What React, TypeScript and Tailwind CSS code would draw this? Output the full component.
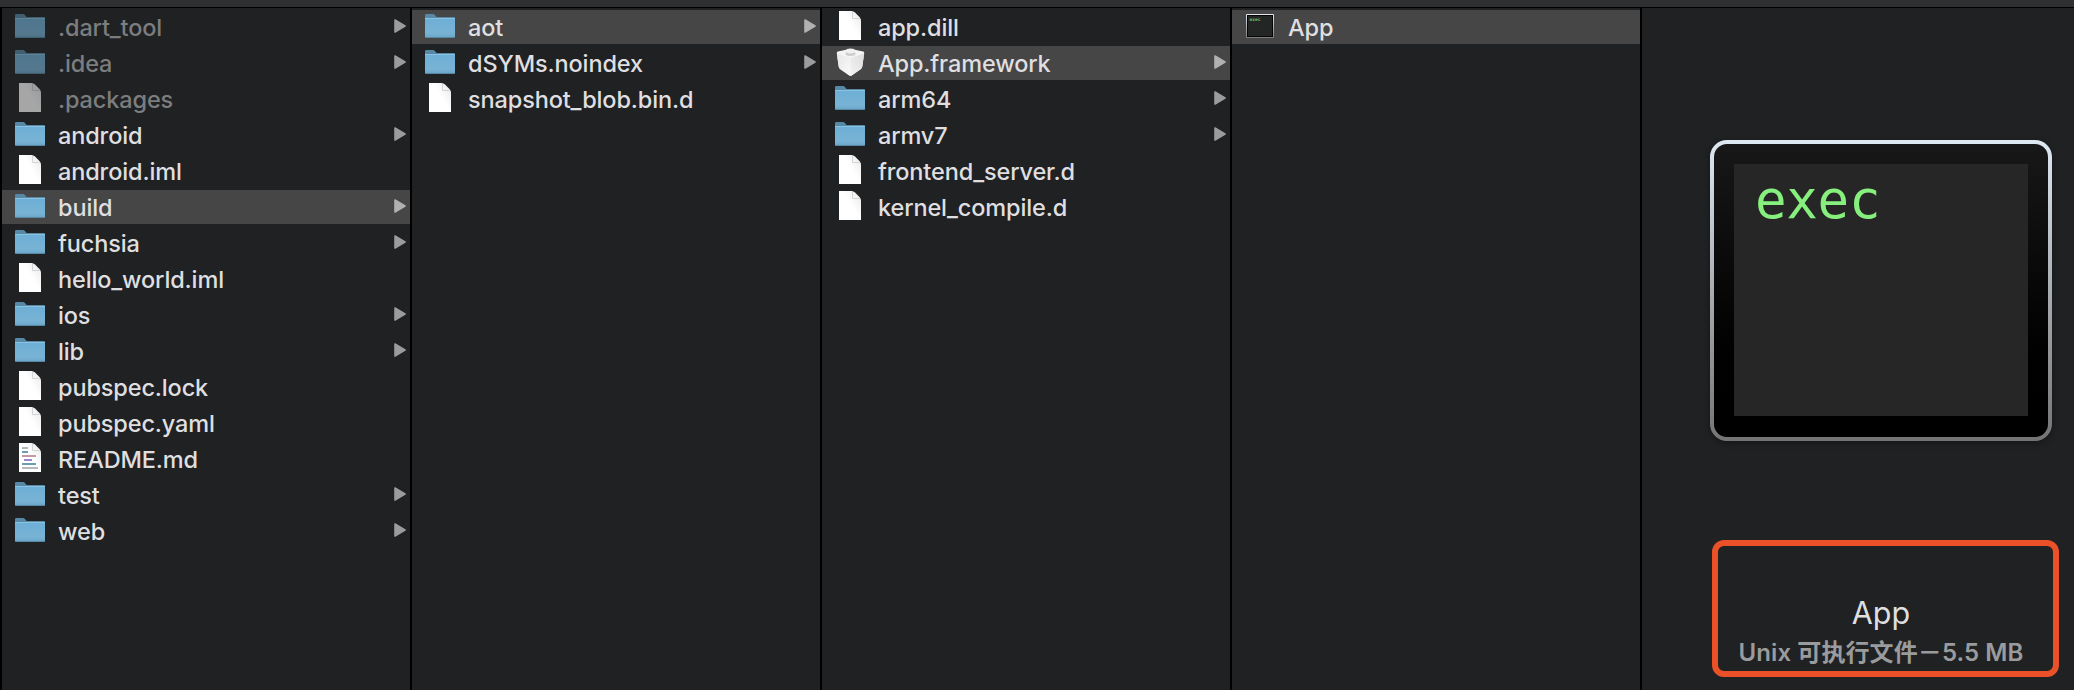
import React from "react";

type Kind = "folder" | "file" | "readme" | "framework" | "exec";
type Entry = { name: string; kind: Kind; arrow?: boolean; dim?: boolean; selected?: boolean };

const columns: Entry[][] = [
  [
    { name: ".dart_tool", kind: "folder", arrow: true, dim: true },
    { name: ".idea", kind: "folder", arrow: true, dim: true },
    { name: ".packages", kind: "file", dim: true },
    { name: "android", kind: "folder", arrow: true },
    { name: "android.iml", kind: "file" },
    { name: "build", kind: "folder", arrow: true, selected: true },
    { name: "fuchsia", kind: "folder", arrow: true },
    { name: "hello_world.iml", kind: "file" },
    { name: "ios", kind: "folder", arrow: true },
    { name: "lib", kind: "folder", arrow: true },
    { name: "pubspec.lock", kind: "file" },
    { name: "pubspec.yaml", kind: "file" },
    { name: "README.md", kind: "readme" },
    { name: "test", kind: "folder", arrow: true },
    { name: "web", kind: "folder", arrow: true },
  ],
  [
    { name: "aot", kind: "folder", arrow: true, selected: true },
    { name: "dSYMs.noindex", kind: "folder", arrow: true },
    { name: "snapshot_blob.bin.d", kind: "file" },
  ],
  [
    { name: "app.dill", kind: "file" },
    { name: "App.framework", kind: "framework", arrow: true, selected: true },
    { name: "arm64", kind: "folder", arrow: true },
    { name: "armv7", kind: "folder", arrow: true },
    { name: "frontend_server.d", kind: "file" },
    { name: "kernel_compile.d", kind: "file" },
  ],
  [{ name: "App", kind: "exec", selected: true }],
];

function Defs() {
  return (
    <svg className="absolute h-0 w-0" aria-hidden="true">
      <defs>
        <linearGradient id="folderFront" x1="0" y1="0" x2="0" y2="1">
          <stop offset="0" stopColor="#6eafd6" />
          <stop offset="0.75" stopColor="#78b3d5" />
          <stop offset="1" stopColor="#69a2c4" />
        </linearGradient>
        <linearGradient id="paper" x1="1" y1="0" x2="0.5" y2="0.4">
          <stop offset="0" stopColor="#e8e8e8" />
          <stop offset="1" stopColor="#ffffff" />
        </linearGradient>
        <linearGradient id="execFrame" x1="0" y1="0" x2="0" y2="1">
          <stop offset="0" stopColor="#dfe8ef" />
          <stop offset="1" stopColor="#7b7b7b" />
        </linearGradient>
        <linearGradient id="brickLeft" x1="0" y1="0" x2="1" y2="1">
          <stop offset="0" stopColor="#e6e6e6" />
          <stop offset="1" stopColor="#fafafa" />
        </linearGradient>
        <linearGradient id="brickRight" x1="1" y1="0" x2="0" y2="1">
          <stop offset="0" stopColor="#dcdcdc" />
          <stop offset="1" stopColor="#f3f3f3" />
        </linearGradient>
      </defs>
    </svg>
  );
}

function Icon({ kind }: { kind: Kind }) {
  return (
    <svg width="32" height="36" viewBox="0 0 32 36" className="block">
      {kind === "folder" && (
        <g>
          <path d="M1 8V6.200q0-1.200 1.200-1.200H9q1 0 1.700.8L12.600 8H30q1 0 1 1V12H1z" fill="#5788a5" />
          <path d="M1 10H31V27.500Q31 29 29.500 29H2.500Q1 29 1 27.500z" fill="url(#folderFront)" />
          <path d="M1 9.500H31" stroke="#8ac3e2" strokeWidth="1" />
          <path d="M1.500 28.500H30.500" stroke="#5687a3" strokeWidth="1" />
        </g>
      )}
      {(kind === "file" || kind === "readme") && (
        <g>
          <path d="M5 2H17.500Q19.500 2 21 3.500L25.500 8Q27 9.500 27 11.500V31H5z" fill="url(#paper)" />
          <path d="M18.500 3V9.500H25.500" fill="none" stroke="#cfcfcf" strokeWidth="0.900" />
        </g>
      )}
      {kind === "readme" && (
        <g strokeWidth="2">
          <path d="M8 7H14" stroke="#b4b8ba" />
          <path d="M8 11H14" stroke="#6b9fae" />
          <path d="M8 15H22" stroke="#c29a9f" />
          <path d="M10 19H18" stroke="#9a86cf" />
          <path d="M8 23H22" stroke="#6b9fae" />
          <path d="M8 27H24" stroke="#b4b8ba" />
        </g>
      )}
      {kind === "framework" && (
        <g>
          <path d="M2.800 8Q2.800 7 3.800 6.600L14.500 4.200Q16.500 3.700 18.500 4.200L29.200 6.600Q30.200 7 30.200 8L28.300 21.500Q28.100 23 27 23.900L18 30.200Q16.500 31.200 15 30.200L6 23.900Q4.900 23 4.700 21.500z" fill="#f4f4f4" />
          <path d="M2.800 8.500L16.500 13V30.800Q15.700 30.700 15 30.200L6 23.900Q4.900 23 4.700 21.500z" fill="url(#brickLeft)" />
          <path d="M30.200 8.500L16.500 13V30.800Q17.300 30.700 18 30.200L27 23.900Q28.100 23 28.300 21.500z" fill="url(#brickRight)" />
          <ellipse cx="16.500" cy="8.800" rx="5" ry="2.200" fill="#cdcdcd" />
          <ellipse cx="16.500" cy="6" rx="4.400" ry="2.400" fill="#f0f0f0" />
        </g>
      )}
      {kind === "exec" && (
        <g>
          <rect x="2" y="5" width="28" height="24" rx="1" fill="url(#execFrame)" />
          <rect x="3" y="6" width="26" height="22" fill="#050505" />
          <rect x="4" y="7" width="24" height="20" fill="#242625" />
          <text x="5.600" y="12" fontSize="4.500" fontWeight="700" fontFamily="DejaVu Sans Mono, monospace" fill="#6fbb6c">
            exec
          </text>
        </g>
      )}
    </svg>
  );
}

function Arrow({ selected }: { selected?: boolean }) {
  return (
    <svg width="12" height="16" viewBox="0 0 12 16" className="mb-[2px]">
      <path
        d="M1 2L11 8L1 14z"
        className={selected ? "fill-[#b1b1b1] stroke-[#b1b1b1]" : "fill-[#9b9c9d] stroke-[#9b9c9d]"}
        strokeWidth="1.600"
        strokeLinejoin="round"
      />
    </svg>
  );
}

function Row({ entry }: { entry: Entry }) {
  return (
    <li className="h-9 py-px">
      <div className={`flex h-[34px] items-center pr-1 pl-3 ${entry.selected ? "bg-[#464646]" : ""}`}>
        <span className={`shrink-0 ${entry.dim ? "opacity-60" : ""}`}>
          <Icon kind={entry.kind} />
        </span>
        <span
          className={`ml-3 grow pt-[2px] text-[23.5px] leading-[32px] font-medium tracking-[-0.13px] whitespace-nowrap ${
            entry.dim ? "text-[#7c7d7e]" : "text-[#dfdfe0]"
          }`}
        >
          {entry.name}
        </span>
        {entry.arrow && <Arrow selected={entry.selected} />}
      </div>
    </li>
  );
}

export default function App() {
  return (
    <div className="flex h-[690px] w-[2074px] flex-col overflow-hidden bg-[#202123] font-[Inter,'Noto_Sans_CJK_SC',sans-serif]">
      <Defs />
      <header className="h-2 shrink-0 border-b border-black bg-[#2e3032]" />
      <main className="flex grow border-l-2 border-black">
        {columns.map((entries, i) => (
          <ul key={i} className="w-[410px] shrink-0 border-r-2 border-black pt-px">
            {entries.map((entry) => (
              <Row key={entry.name} entry={entry} />
            ))}
          </ul>
        ))}
        <section className="flex grow flex-col pl-[68px]">
          <div className="mt-[132px] h-[301px] w-[342px] shrink-0 rounded-[17px] bg-linear-to-b from-[#dfe9f2] to-[#747474] p-1 shadow-[0_2px_6px_rgba(0,0,0,0.35)]">
            <div className="h-full rounded-[13px] bg-linear-to-b from-[#181818] via-[#070707] to-black px-5 py-5">
              <div className="h-[252px] w-[294px] bg-[#262626] pt-[4px] pl-[21px] font-['DejaVu_Sans_Mono',monospace] text-[52.5px] leading-[64px] tracking-[-0.3px] text-[#86ef7d]">
                exec
              </div>
            </div>
          </div>
          <div className="mt-[99px] ml-[2px] flex h-[137px] w-[347px] shrink-0 flex-col items-center rounded-xl border-6 border-[#ea5129] pt-[47px] pr-[9px]">
            <p className="text-[30.5px] leading-[40px] text-[#dfdfe0]">App</p>
            <p className="mt-[3px] text-[24px] leading-[34px] font-semibold tracking-[0.1px] whitespace-nowrap text-[#9a9b9c]">
              Unix 可执行文件－5.5 MB
            </p>
          </div>
        </section>
      </main>
    </div>
  );
}
